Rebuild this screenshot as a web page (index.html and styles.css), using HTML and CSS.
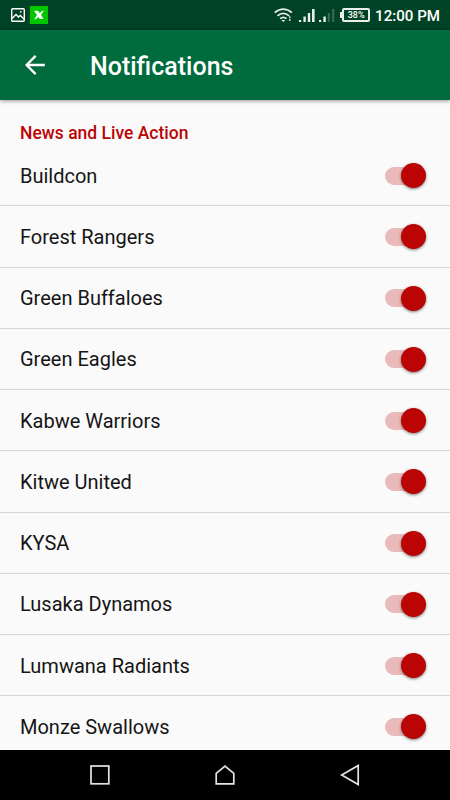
FILE: index.html
```html
<!DOCTYPE html>
<html lang="en">
<head>
    <meta charset="UTF-8">
    <meta name="viewport" content="width=device-width, initial-scale=1.0">
    <title>Notifications</title>
    <link rel="stylesheet" href="styles.css">
</head>
<body>

    <!-- Status Bar -->
    <div class="status-bar">
        <svg class="picture-icon" width="14" height="14" viewBox="0 0 14 14" fill="none" stroke="#fff" stroke-width="1.4">
            <rect x="0.7" y="0.7" width="12.6" height="12.6" rx="1"/>
            <path d="M1 10.5 L5 6.5 L7.5 9 L9.2 7.5 L13 11"/>
            <circle cx="9.8" cy="3.8" r="0.9" fill="#fff" stroke="none"/>
        </svg>
        <svg class="app-icon" width="18" height="18" viewBox="0 0 18 18">
            <rect width="18" height="18" fill="#00c800"/>
            <path d="M4 4.7 H8 L9.7 7 Q11.5 4.8 14 4.5 L11 9 L13.5 13 H9.8 L8.5 11 Q6.5 13.2 4 13.5 L7 9 Z" fill="#fff"/>
        </svg>
        <div class="status-right">
            <svg class="wifi" width="19" height="15" viewBox="0 0 19 15" fill="none" stroke="#e8eeea" stroke-width="1.7">
                <path d="M0.7 4.7 Q9.3 -2.4 17.9 4.7"/>
                <path d="M3.4 7.8 Q9.3 3 15.2 7.8"/>
                <path d="M6.1 10.6 Q9.3 8 12.5 10.6"/>
                <path d="M7.3 12 H11.3 L9.3 14 Z" fill="#e8eeea" stroke="none"/>
                <path d="M15.8 8.3 V10.3 M15.8 11 V13" stroke-width="1.3"/>
            </svg>
            <svg class="signal" width="16" height="13" viewBox="0 0 16 13" fill="#e8eeea">
                <rect x="0" y="11" width="2.2" height="2"/>
                <rect x="4.4" y="7.5" width="2.4" height="5.5"/>
                <rect x="8.8" y="4" width="2.4" height="9"/>
                <rect x="13" y="0" width="2.6" height="13"/>
            </svg>
            <svg class="signal second" width="16" height="13" viewBox="0 0 16 13" fill="#e8eeea">
                <rect x="0" y="11" width="2.2" height="2"/>
                <rect x="4.4" y="7.5" width="2.4" height="5.5"/>
                <rect x="8.8" y="4" width="2" height="9" opacity="0.25"/>
                <rect x="13.2" y="0" width="2" height="13" opacity="0.25"/>
            </svg>
            <div class="battery"><span>38%</span></div>
            <span class="clock">12:00 PM</span>
        </div>
    </div>

    <!-- Toolbar -->
    <div class="toolbar">
        <svg class="back" width="20" height="20" viewBox="0 0 20 20" fill="none" stroke="#fff" stroke-width="2.4">
            <path d="M19.8 10 H2 M10.6 0.9 L1.6 10 L10.6 19.1"/>
        </svg>
        <h1>Notifications</h1>
    </div>

    <!-- Teams -->
    <div class="content">
        <h2>News and Live Action</h2>
        <div class="row"><span>Buildcon</span><div class="switch"></div></div>
        <div class="row"><span>Forest Rangers</span><div class="switch"></div></div>
        <div class="row"><span>Green Buffaloes</span><div class="switch"></div></div>
        <div class="row"><span>Green Eagles</span><div class="switch"></div></div>
        <div class="row"><span>Kabwe Warriors</span><div class="switch"></div></div>
        <div class="row"><span>Kitwe United</span><div class="switch"></div></div>
        <div class="row"><span>KYSA</span><div class="switch"></div></div>
        <div class="row"><span>Lusaka Dynamos</span><div class="switch"></div></div>
        <div class="row"><span>Lumwana Radiants</span><div class="switch"></div></div>
        <div class="row"><span>Monze Swallows</span><div class="switch"></div></div>
    </div>

    <!-- Navigation Bar -->
    <div class="nav-bar">
        <svg width="22" height="24" viewBox="0 0 22 24">
            <rect x="2" y="3" width="17.8" height="17.8"/>
        </svg>
        <svg width="22" height="24" viewBox="0 0 22 24">
            <path d="M2.2 20.8 V10.3 L11 3 L19.8 10.3 V20.8 Z"/>
        </svg>
        <svg width="22" height="24" viewBox="0 0 22 24">
            <path d="M2.7 12 L19.2 2.4 V21.6 Z"/>
        </svg>
    </div>

</body>
</html>
```

FILE: styles.css
```css
* {
    box-sizing: border-box;
}
body {
    margin: 0;
    width: 450px;
    height: 800px;
    display: flex;
    flex-direction: column;
    overflow: hidden;
    font-family: Roboto, sans-serif;
    background: #fafafa;
}
.status-bar {
    height: 30px;
    flex: none;
    display: flex;
    align-items: center;
    padding: 0 10px 0 11px;
    background: #004225;
    color: #fff;
}
.app-icon {
    margin-left: 5px;
}
.status-right {
    display: flex;
    align-items: center;
    margin-left: auto;
}
.signal {
    margin-left: 6px;
    margin-top: 1px;
}
.second {
    margin-left: 4px;
}
.battery {
    position: relative;
    width: 28px;
    height: 14px;
    margin-left: 7px;
    border: 2px solid #e8eeea;
    border-radius: 2px;
    font-size: 9px;
    font-weight: 500;
    line-height: 11px;
    text-align: center;
}
.battery::before {
    content: "";
    position: absolute;
    left: -4px;
    top: 2px;
    width: 2px;
    height: 6px;
    background: #e8eeea;
}
.clock {
    margin: 1px 0 0 5px;
    font-size: 15.1px;
    font-weight: 500;
}
.toolbar {
    position: relative;
    height: 70px;
    flex: none;
    display: flex;
    align-items: center;
    padding-left: 25px;
    background: #006b3d;
    color: #fff;
    box-shadow: 0 1px 4px rgba(0, 0, 0, 0.4);
}
.toolbar h1 {
    margin: 3px 0 0 45px;
    font-size: 25px;
    font-weight: 500;
}
.content {
    flex: 1;
    min-height: 0;
    overflow: hidden;
}
.content h2 {
    height: 45px;
    margin: 0;
    padding: 23px 20px 0;
    font-size: 17.5px;
    font-weight: 500;
    line-height: 21px;
    color: #bb0404;
}
.row {
    height: 61.25px;
    display: flex;
    justify-content: space-between;
    align-items: center;
    padding: 1px 25px 0 20px;
    border-bottom: 1px solid #d5d5d5;
    font-size: 20px;
    color: #151515;
}
.switch {
    position: relative;
    width: 40px;
    height: 18px;
    border-radius: 9px;
    background: #eababa;
}
.switch::after {
    content: "";
    position: absolute;
    right: -0.5px;
    top: -3.5px;
    width: 25px;
    height: 25px;
    border-radius: 50%;
    background: #bb0404;
    box-shadow: 0 1px 3px rgba(0, 0, 0, 0.5);
}
.nav-bar {
    height: 50px;
    flex: none;
    display: flex;
    justify-content: center;
    align-items: center;
    gap: 103px;
    background: #000;
}
.nav-bar svg {
    fill: none;
    stroke: #e4e4e4;
    stroke-width: 1.7;
}
```
